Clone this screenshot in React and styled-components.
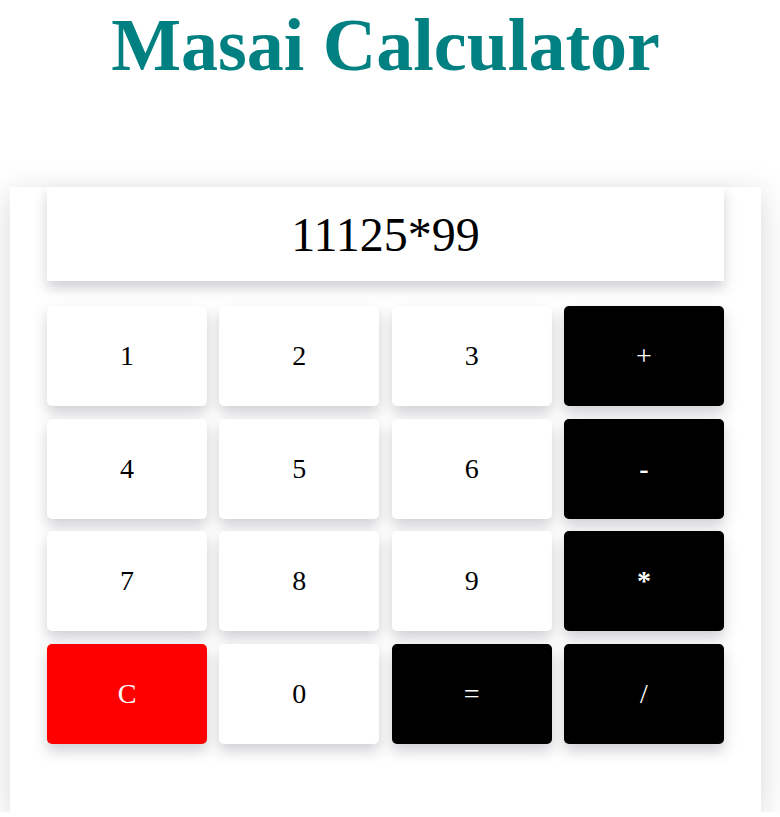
import React from "react";
import styled, { createGlobalStyle } from "styled-components";

const GlobalStyle = createGlobalStyle`
  body {
    margin: 0;
    background: #ffffff;
    font-family: "Liberation Serif", "Times New Roman", serif;
  }
`;

const Page = styled.div`
  width: 771px;
`;

const Title = styled.h1`
  margin: 0;
  padding-top: 2px;
  height: 185px;
  text-align: center;
  color: #008080;
  font-size: 74px;
  font-weight: bold;
  line-height: 86px;
`;

const CalcBox = styled.div`
  width: 751px;
  margin-left: 10px;
  box-sizing: border-box;
  padding: 0 37px 68px;
  background: #ffffff;
  box-shadow: rgba(100, 100, 111, 0.25) 0px 7px 29px 0px;
`;

const Display = styled.div`
  height: 94px;
  display: flex;
  align-items: center;
  justify-content: center;
  font-size: 48px;
  color: #000000;
  background: #ffffff;
  box-shadow: rgba(100, 100, 111, 0.3) 0px 7px 12px 0px;
`;

const Keypad = styled.div`
  margin-top: 25px;
  display: grid;
  grid-template-columns: repeat(4, 1fr);
  grid-auto-rows: 100px;
  column-gap: 12.33px;
  row-gap: 12.7px;
`;

const Key = styled.div`
  display: flex;
  align-items: center;
  justify-content: center;
  border-radius: 5px;
  font-size: 28px;
  font-weight: ${(p) => (p.$bold ? "bold" : "normal")};
  color: ${(p) => (p.$bg === "#ffffff" ? "#000000" : "#ffffff")};
  background: ${(p) => p.$bg};
  box-shadow: rgba(100, 100, 111, 0.3) 0px 7px 14px 0px;
`;

const keys = [
  { label: "1", bg: "#ffffff" },
  { label: "2", bg: "#ffffff" },
  { label: "3", bg: "#ffffff" },
  { label: "+", bg: "#000000" },
  { label: "4", bg: "#ffffff" },
  { label: "5", bg: "#ffffff" },
  { label: "6", bg: "#ffffff" },
  { label: "-", bg: "#000000", bold: true },
  { label: "7", bg: "#ffffff" },
  { label: "8", bg: "#ffffff" },
  { label: "9", bg: "#ffffff" },
  { label: "*", bg: "#000000", bold: true },
  { label: "C", bg: "#ff0000" },
  { label: "0", bg: "#ffffff" },
  { label: "=", bg: "#000000" },
  { label: "/", bg: "#000000" },
];

function App() {
  return (
    <Page>
      <GlobalStyle />
      <Title>Masai Calculator</Title>
      <CalcBox>
        <Display>11125*99</Display>
        <Keypad>
          {keys.map((k) => (
            <Key key={k.label} $bg={k.bg} $bold={k.bold}>
              {k.label}
            </Key>
          ))}
        </Keypad>
      </CalcBox>
    </Page>
  );
}

export default App;
